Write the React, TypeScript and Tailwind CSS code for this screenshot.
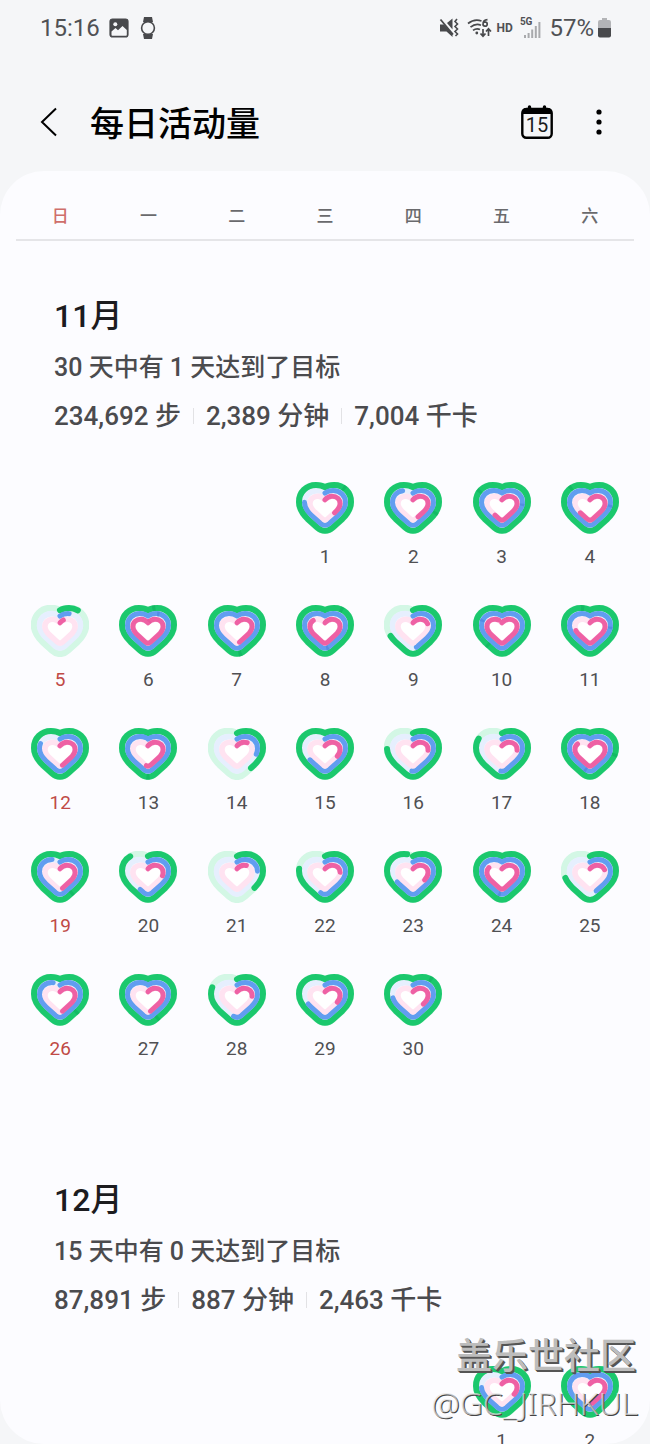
import clsx from "clsx";

type Rings = [number, number, number];

interface Month {
  title: string;
  summary: string;
  stats: string[];
  firstWeekday: number;
  days: Rings[];
}

const WEEKDAYS = ["日", "一", "二", "三", "四", "五", "六"];

// steps / minutes / kcal as a share of the daily goal
const MONTHS: Month[] = [
  {
    title: "11月",
    summary: "30 天中有 1 天达到了目标",
    stats: ["234,692 步", "2,389 分钟", "7,004 千卡"],
    firstWeekday: 3,
    days: [
      [1.12, 0.78, 0.37],
      [1.3, 0.92, 0.44],
      [1.83, 1.24, 0.61],
      [1.86, 1.25, 0.65],
      [0.13, 0.09, 0.06],
      [1.03, 1.08, 1.01],
      [1.47, 1, 0.48],
      [1.1, 1.47, 0.86],
      [0.7, 0.48, 0.21],
      [1.6, 1.8, 0.96],
      [1.94, 1.24, 0.73],
      [1, 0.82, 0.48],
      [1.49, 0.99, 0.53],
      [0.4, 0.29, 0.14],
      [1, 0.67, 0.33],
      [0.77, 0.52, 0.25],
      [0.84, 0.52, 0.25],
      [1.27, 1.53, 0.85],
      [1.4, 0.94, 0.48],
      [0.89, 0.59, 0.28],
      [0.37, 0.24, 0.13],
      [0.79, 0.55, 0.24],
      [0.97, 0.68, 0.34],
      [1, 1.51, 0.84],
      [0.73, 0.45, 0.21],
      [1.36, 0.95, 0.48],
      [1.42, 0.99, 0.48],
      [0.82, 0.54, 0.25],
      [1, 0.69, 0.33],
      [1.11, 0.75, 0.36],
    ],
  },
  {
    title: "12月",
    summary: "15 天中有 0 天达到了目标",
    stats: ["87,891 步", "887 分钟", "2,463 千卡"],
    firstWeekday: 5,
    days: [
      [1, 0.77, 0.33],
      [1, 0.99, 0.48],
    ],
  },
];

const RINGS = [
  {
    d: "M29 5.2C31.5 3.6 35 3 38 3C47.5 3 55 10 55 20C55 27 51.3 32 46.3 37L36.8 45.5C32 49.9 26 49.9 21.2 45.5L11.7 37C6.7 32 3 27 3 20C3 10 10.5 3 20 3C23 3 26.5 3.6 29 5.2Z",
    width: 6,
    track: "#d3f7e5",
    color: "#1bc86d",
    over: "#08a558",
  },
  {
    d: "M29 11C31.5 9.2 34.5 8.6 37 8.6C44 8.6 49.5 13.3 49.5 20.5C49.5 25.7 46.8 29.3 42.8 33L33.8 41.2C31 43.9 27 43.9 24.2 41.2L15.2 33C11.2 29.3 8.5 25.7 8.5 20.5C8.5 13.3 14 8.6 21 8.6C23.5 8.6 26.5 9.2 29 11Z",
    width: 5,
    track: "#e6effe",
    color: "#619df0",
    over: "#3f76cf",
  },
  {
    d: "M29 17.8C31.2 15 33.5 14.2 36 14.2C40.8 14.2 44.1 17.3 44.1 21.5C44.1 25.2 42 27.7 39 30.4L31.7 37C30 38.5 28 38.5 26.3 37L19 30.4C16 27.7 13.9 25.2 13.9 21.5C13.9 17.3 17.2 14.2 22 14.2C24.5 14.2 26.8 15 29 17.8Z",
    width: 5,
    track: "#ffe3f1",
    color: "#ee61a4",
    over: "#d94f90",
  },
];

function HeartRings({ values }: { values: Rings }) {
  return (
    <svg viewBox="0 0 58 52" className="h-[52px] w-[58px]" fill="none" aria-hidden="true">
      <path d={RINGS[2].d} fill="#fff" />
      {RINGS.map((ring) => (
        <path key={ring.color} d={ring.d} stroke={ring.track} strokeWidth={ring.width + 0.6} strokeLinejoin="round" />
      ))}
      {RINGS.map((ring, i) => {
        const value = values[i];
        return (
          <g key={ring.color} strokeWidth={ring.width} strokeLinecap="round" strokeLinejoin="round">
            {value >= 1 ? (
              <path d={ring.d} stroke={ring.color} />
            ) : (
              <path d={ring.d} stroke={ring.color} pathLength={100} strokeDasharray={`${value * 100 - 1} 200`} />
            )}
            {value > 1 && (
              <path
                d={ring.d}
                stroke={ring.over}
                strokeOpacity="0.4"
                strokeLinecap="butt"
                pathLength={100}
                strokeDasharray="2 200"
                strokeDashoffset={-(value - 1) * 100}
              />
            )}
          </g>
        );
      })}
    </svg>
  );
}

function StatusBar() {
  return (
    <div className="flex h-14 shrink-0 items-center justify-between pl-10 pr-[39px] text-[24px] leading-7 text-[#505154]">
      <div className="flex items-center">
        <span>15:16</span>
        <svg viewBox="0 0 20 20" className="ml-[9px] h-5 w-5">
          <rect x="1" y="1" width="18" height="18" rx="2.5" fill="#48494c" stroke="#48494c" strokeWidth="1.2" />
          <path d="M2.5 13.5L6.5 10L9 12.2L13.5 8L17.8 12V17Q17.8 17.8 17 17.8H3.3Q2.5 17.8 2.5 17Z" fill="#f5f6f8" />
          <circle cx="6.3" cy="6.3" r="2" fill="#f5f6f8" />
        </svg>
        <svg viewBox="0 0 16 22" className="ml-[11px] h-[22px] w-4" fill="#48494c">
          <path d="M4 0H12L13 5H3ZM3 17H13L12 22H4Z" />
          <circle cx="8" cy="11" r="6.4" fill="#f5f6f8" stroke="#48494c" strokeWidth="1.6" />
        </svg>
      </div>
      <div className="flex items-center">
        <svg viewBox="0 0 20 20" className="h-5 w-5" fill="#48494c">
          <path d="M1 6.5H5L13.5 15V19L7.5 13.5H1Z" />
          <path d="M8 5L13.5 0.5V11.5Z" />
          <path d="M1.5 1.5L14 16.5" stroke="#48494c" strokeWidth="1.8" />
          <path
            d="M18 1L16 3.5L18.5 6L16 8.5L18.5 11L16 13.5L18.5 16L16.5 18"
            fill="none"
            stroke="#48494c"
            strokeWidth="1.6"
          />
        </svg>
        <svg viewBox="0 0 25 20" className="ml-2 h-5 w-[25px]" fill="none" stroke="#48494c" strokeWidth="1.7">
          <path d="M1 5.5Q7.5 0.3 14.5 3M3.5 9.2Q8.5 5 14 7.2M6 12.4Q9.5 9.7 13 11.5" />
          <circle cx="9.8" cy="15" r="1.4" fill="#48494c" stroke="none" />
          <path d="M20.5 1.6Q16 2 16 6A2.1 2.1 0 1 0 18.2 4Q16.5 4 16 5.6" />
          <path d="M16 11V18M13.5 15.5L16 18.2L18.5 15.5M21.5 18V11M19 13.5L21.5 10.8L24 13.5" />
        </svg>
        <span className="ml-[5px] text-[12px] font-bold leading-4">HD</span>
        <span className="ml-[7px] mb-3 text-[10px] font-bold leading-3">5G</span>
        <svg viewBox="0 0 17 20" className="-ml-2 h-5 w-[17px]" fill="#a9aaad">
          <path d="M0 17h2v3H0zM3.6 15h2v5h-2zM7.2 11.5h2V20h-2zM10.8 8h2v12h-2zM14.4 4h2v16h-2z" />
        </svg>
        <span className="ml-2">57%</span>
        <svg viewBox="0 0 13 20" className="ml-1 h-5 w-[13px]">
          <path d="M4 0H9V2H11Q13 2 13 4V10H0V4Q0 2 2 2H4Z" fill="#b3b4b7" />
          <path d="M0 10H13V17.5Q13 19.5 11 19.5H2Q0 19.5 0 17.5Z" fill="#48494c" />
        </svg>
      </div>
    </div>
  );
}

function Header() {
  return (
    <header className="flex h-[115px] shrink-0 items-center pl-10 pr-[45px] pt-4">
      <button type="button" aria-label="返回">
        <svg viewBox="0 0 18 30" className="h-[30px] w-[18px]" fill="none" stroke="#000" strokeWidth="2">
          <path d="M16 1.5L2 15L16 28.5" />
        </svg>
      </button>
      <h1 className="ml-8 pt-1 text-[34px] font-medium leading-[44px] text-black">每日活动量</h1>
      <button type="button" aria-label="今天" className="ml-auto mr-10 h-[34px] w-8">
        <svg viewBox="0 0 32 34" className="h-[34px] w-8">
          <rect x="1.3" y="4" width="29.4" height="28.7" rx="4" fill="none" stroke="#000" strokeWidth="2.4" />
          <path d="M1 8Q1 3 5 3H27Q31 3 31 8V9H1Z" />
          <path d="M8.5 2V5M23.5 2V5" stroke="#000" strokeWidth="3.4" strokeLinecap="round" />
          <text x="16" y="27" textAnchor="middle" fontSize="20" fill="#1b1b1d">
            15
          </text>
        </svg>
      </button>
      <button type="button" aria-label="更多选项">
        <svg viewBox="0 0 12 28" className="h-7 w-3">
          <circle cx="6" cy="4" r="2.6" />
          <circle cx="6" cy="14" r="2.6" />
          <circle cx="6" cy="24" r="2.6" />
        </svg>
      </button>
    </header>
  );
}

function MonthSection({ month }: { month: Month }) {
  return (
    <section className="pb-7 pt-[55px]">
      <div className="px-[38px] font-medium leading-8 text-[#4b4b4e]">
        <h2 className="text-[32px] leading-10 text-[#1c1c1f]">{month.title}</h2>
        <p className="mt-4 text-[25px] leading-8">{month.summary}</p>
        <p className="mt-4 flex items-center text-[26px] leading-8">
          {month.stats.map((stat, i) => (
            <span key={stat} className="flex items-center">
              {i > 0 && <span className="mx-3 h-4 w-px bg-[#e2e2e5]" />}
              {stat}
            </span>
          ))}
        </p>
      </div>
      <div className="mt-[50px] grid grid-cols-7">
        {month.days.map((values, i) => {
          const weekday = (month.firstWeekday + i) % 7;
          return (
            <button
              key={i}
              type="button"
              className={clsx(
                "mb-9 flex flex-col items-center text-[19px] leading-6",
                i === 0 && month.firstWeekday === 3 && "col-start-4",
                i === 0 && month.firstWeekday === 5 && "col-start-6",
                weekday === 0 ? "text-[#c04a46]" : "text-[#505053]"
              )}
            >
              <HeartRings values={values} />
              <span className="mt-[11px]">{i + 1}</span>
            </button>
          );
        })}
      </div>
    </section>
  );
}

export default function App() {
  return (
    <div className="relative flex h-screen flex-col overflow-hidden bg-[#f5f6f8] font-['Roboto','Noto_Sans_CJK_SC',sans-serif]">
      <StatusBar />
      <Header />
      <main className="flex min-h-0 flex-1 flex-col overflow-hidden rounded-[44px] bg-[#fcfcff] px-4">
        <div className="grid h-[70px] shrink-0 grid-cols-7 items-center border-b-2 border-[#e5e5e8] pt-[22px] text-center text-[17px] font-medium leading-6 text-[#6a6a6d]">
          {WEEKDAYS.map((day, i) => (
            <span key={day} className={clsx(i === 0 && "text-[#cf6f6b]")}>
              {day}
            </span>
          ))}
        </div>
        <div className="min-h-0 flex-1 overflow-y-auto [scrollbar-width:none]">
          {MONTHS.map((month) => (
            <MonthSection key={month.title} month={month} />
          ))}
        </div>
      </main>
      {/* Community watermark */}
      <div className="pointer-events-none absolute bottom-[18px] right-3 text-right">
        <p className="pr-[2px] text-[36px] font-medium leading-[46px] text-[#bdbdbd] [text-shadow:1px_1px_0_#555,2px_2px_0_#555]">
          盖乐世社区
        </p>
        <p className="font-['Noto_Sans',sans-serif] text-[32px] font-light leading-[46px] text-[#e4e4e4]/70 [text-shadow:1px_1px_0_#444]">
          @GC_JIRHKUL
        </p>
      </div>
    </div>
  );
}
